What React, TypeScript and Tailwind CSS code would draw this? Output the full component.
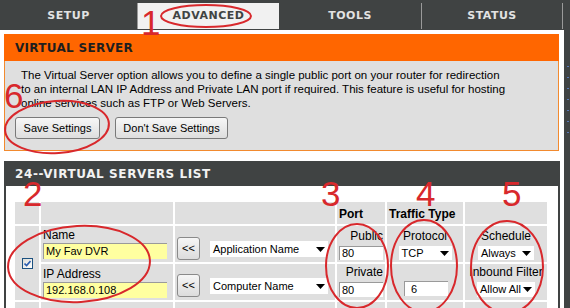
import React from 'react';

const RED = '#d8282c';

function Arrow() {
  return (
    <svg width="9" height="5" viewBox="0 0 9 5" className="shrink-0">
      <path d="M0 0 H9 L4.5 5 Z" fill="#000" />
    </svg>
  );
}

function Select({ label, className }: { label: string; className: string }) {
  return (
    <div className={`flex items-center justify-between gap-[2px] bg-white pl-[3px] pr-[3px] text-[11px] leading-none text-black ${className}`}>
      <span className="whitespace-nowrap">{label}</span>
      <Arrow />
    </div>
  );
}

function Field({ value, className }: { value: string; className: string }) {
  return (
    <div className={`flex items-center border-t border-l border-[#9a9a9a] pl-[2px] text-[11px] leading-none text-black ${className}`}>
      {value}
    </div>
  );
}

function ArrowButton() {
  return (
    <div className="flex h-[23px] w-[23px] items-center justify-center rounded-[3px] border border-[#8a8a8a] bg-gradient-to-b from-[#f6f6f6] to-[#dcdcdc] text-[11px] text-black">
      &lt;&lt;
    </div>
  );
}

function Annotations() {
  const digit = { fill: RED, fontSize: 35, fontFamily: '"Liberation Sans", Arial, sans-serif' };
  return (
    <svg className="pointer-events-none absolute inset-0" width="570" height="308">
      <g fill="none" stroke={RED} strokeWidth="2">
        <ellipse cx="206" cy="16" rx="45" ry="11" />
        <ellipse cx="57" cy="127" rx="52" ry="26" transform="rotate(-4 57 127)" />
        <ellipse cx="79" cy="264" rx="71" ry="38" transform="rotate(-3 79 264)" />
        <ellipse cx="357" cy="266" rx="31" ry="42" />
        <ellipse cx="424" cy="266" rx="33" ry="46" />
        <ellipse cx="507" cy="267" rx="36" ry="46" />
      </g>
      <text x="141" y="35" {...digit}>1</text>
      <text x="4" y="108" {...digit}>6</text>
      <text x="23" y="206" {...digit}>2</text>
      <text x="321" y="206" {...digit}>3</text>
      <text x="416" y="206" {...digit}>4</text>
      <text x="502" y="206" {...digit}>5</text>
    </svg>
  );
}

export default function App() {
  return (
    <div className="relative h-[308px] w-[570px] overflow-hidden bg-white font-['Liberation_Sans',Arial,sans-serif] text-black">
      {/* Top tabs */}
      <div className="flex h-[30px] bg-[#404343] pt-[3px] pb-[1px] font-['DejaVu_Sans',Verdana,sans-serif] text-[11px] font-bold tracking-[0.5px]">
        <div className="flex w-[138px] items-center justify-center border-r border-[#9a9a9a] text-[#e2e2e2]">SETUP</div>
        <div className="flex w-[141px] items-center justify-center bg-[#f1f1f1] text-[#404343]">ADVANCED</div>
        <div className="flex w-[143px] items-center justify-center border-r border-[#9a9a9a] text-[#e2e2e2]">TOOLS</div>
        <div className="flex w-[141px] items-center justify-center border-r border-[#9a9a9a] text-[#e2e2e2]">STATUS</div>
      </div>

      <div className="flex">
        <div className="ml-[4px] w-[556px]">
          {/* Virtual server intro */}
          <div className="mt-[4px] w-[555px]">
            <div className="flex h-[27px] items-center bg-[#ff6600] px-[11px] font-['DejaVu_Sans',Verdana,sans-serif] text-[12px] font-bold tracking-[0.3px] text-[#1e1e1e]">
              VIRTUAL SERVER
            </div>
            <div className="h-[90px] border-x border-b border-[#f28a2e] bg-[#dfdfdf] pt-[7px] pl-[16px] text-[11.5px] leading-[14px]">
              <p>The Virtual Server option allows you to define a single public port on your router for redirection</p>
              <p>to an internal LAN IP Address and Private LAN port if required. This feature is useful for hosting</p>
              <p>online services such as FTP or Web Servers.</p>
              <div className="mt-[7px] -ml-[6px] flex gap-[15px]">
                <div className="flex h-[22px] w-[85px] items-center justify-center rounded-[3px] border border-[#7a7a7a] bg-gradient-to-b from-[#f7f7f7] to-[#dedede] text-[11px]">
                  Save Settings
                </div>
                <div className="flex h-[22px] w-[113px] items-center justify-center rounded-[3px] border border-[#7a7a7a] bg-gradient-to-b from-[#f7f7f7] to-[#dedede] text-[11px]">
                  Don't Save Settings
                </div>
              </div>
            </div>
          </div>

          {/* Virtual servers list */}
          <div className="mt-[10px]">
            <div className="flex h-[25px] items-center bg-[#404343] px-[11px] font-['DejaVu_Sans',Verdana,sans-serif] text-[12px] font-bold tracking-[0.6px] text-[#f2f2f2]">
              24--VIRTUAL SERVERS LIST
            </div>
            <div className="border-x-2 border-[#404343] bg-white pt-[16px] pl-[9px] pb-[10px]">
              <div className="grid grid-cols-[24px_132px_160px_48px_76px_82px] grid-rows-[22px_36px_36px_22px] gap-[2px] text-[11px] leading-none">
                {/* header row */}
                <div className="bg-[#dfdfdf]" />
                <div className="bg-[#dfdfdf]" />
                <div className="bg-[#dfdfdf]" />
                <div className="flex items-end bg-[#dfdfdf] pb-[4px] pl-[2px] text-[12px] font-bold">Port</div>
                <div className="flex items-end bg-[#dfdfdf] pb-[4px] pl-[2px] text-[12px] font-bold">Traffic Type</div>
                <div className="bg-[#dfdfdf]" />

                {/* checkbox spans both rows */}
                <div className="row-span-2 flex items-center justify-center bg-[#dfdfdf] pl-[1px]">
                  <div className="flex h-[11px] w-[11px] items-center justify-center border border-[#1c5180] bg-gradient-to-br from-[#dcdcd7] to-white">
                    <svg width="7" height="7" viewBox="0 0 7 7">
                      <path d="M0.5 3.5 L2.6 5.6 L6.5 1" fill="none" stroke="#2a5db0" strokeWidth="1.6" />
                    </svg>
                  </div>
                </div>

                {/* row 1 */}
                <div className="flex flex-col bg-[#dfdfdf] pt-[2px] pl-[2px]">
                  <span className="text-[12px] leading-[14px]">Name</span>
                  <Field value="My Fav DVR" className="mt-[1px] h-[16px] w-[124px] bg-[#ffffa0]" />
                </div>
                <div className="flex items-end gap-[10px] bg-[#dfdfdf] pb-[2px] pl-[2px]">
                  <ArrowButton />
                  <Select label="Application Name" className="mb-[3px] h-[16px] w-[118px]" />
                </div>
                <div className="flex flex-col items-end bg-[#dfdfdf] pt-[3px] pr-[2px]">
                  <span className="text-[12px] leading-[14px]">Public</span>
                  <Field value="80" className="mt-[3px] h-[14px] w-[44px] bg-white" />
                </div>
                <div className="flex flex-col items-center bg-[#dfdfdf] pt-[3px]">
                  <span className="text-[12px] leading-[14px]">Protocol</span>
                  <Select label="TCP" className="mt-[3px] h-[14px] w-[53px]" />
                </div>
                <div className="flex flex-col items-center bg-[#dfdfdf] pt-[3px]">
                  <span className="text-[12px] leading-[14px]">Schedule</span>
                  <Select label="Always" className="mt-[3px] h-[14px] w-[56px]" />
                </div>

                {/* row 2 */}
                <div className="flex flex-col bg-[#dfdfdf] pt-[3px] pl-[2px]">
                  <span className="text-[12px] leading-[14px]">IP Address</span>
                  <Field value="192.168.0.108" className="mt-[1px] h-[16px] w-[124px] bg-[#ffffa0]" />
                </div>
                <div className="flex items-end gap-[10px] bg-[#dfdfdf] pb-[3px] pl-[2px]">
                  <ArrowButton />
                  <Select label="Computer Name" className="mb-[3px] h-[16px] w-[118px]" />
                </div>
                <div className="flex flex-col items-end bg-[#dfdfdf] pt-[1px] pr-[2px]">
                  <span className="text-[12px] leading-[14px]">Private</span>
                  <Field value="80" className="mt-[3px] h-[15px] w-[44px] bg-white" />
                </div>
                <div className="flex flex-col items-center justify-end bg-[#dfdfdf] pb-[4px]">
                  <Field value="6" className="ml-[2px] h-[15px] w-[44px] bg-white pl-[6px]" />
                </div>
                <div className="flex flex-col items-center bg-[#dfdfdf] pt-[1px]">
                  <span className="whitespace-nowrap text-[12px] leading-[14px]">Inbound Filter</span>
                  <Select label="Allow All" className="mt-[3px] h-[15px] w-[58px]" />
                </div>

                {/* row 3 (cut off) */}
                <div className="bg-[#dfdfdf]" />
                <div className="bg-[#dfdfdf]" />
                <div className="bg-[#dfdfdf]" />
                <div className="bg-[#dfdfdf]" />
                <div className="bg-[#dfdfdf]" />
                <div className="bg-[#dfdfdf]" />
              </div>
            </div>
          </div>
        </div>

        {/* right sidebar edge */}
        <div className="ml-[4px] flex h-[278px] w-[6px] flex-col gap-[10px] bg-[#404343] pt-[36px] pl-[3px]">
          <span className="h-[1px] w-[2px] bg-[#5a7ab8]" />
          <span className="h-[1px] w-[2px] bg-[#5a7ab8]" />
          <span className="h-[1px] w-[2px] bg-[#5a7ab8]" />
          <span className="h-[1px] w-[2px] bg-[#5a7ab8]" />
          <span className="h-[1px] w-[2px] bg-[#5a7ab8]" />
          <span className="h-[1px] w-[2px] bg-[#5a7ab8]" />
          <span className="h-[1px] w-[2px] bg-[#5a7ab8]" />
        </div>
      </div>

      <Annotations />
    </div>
  );
}
